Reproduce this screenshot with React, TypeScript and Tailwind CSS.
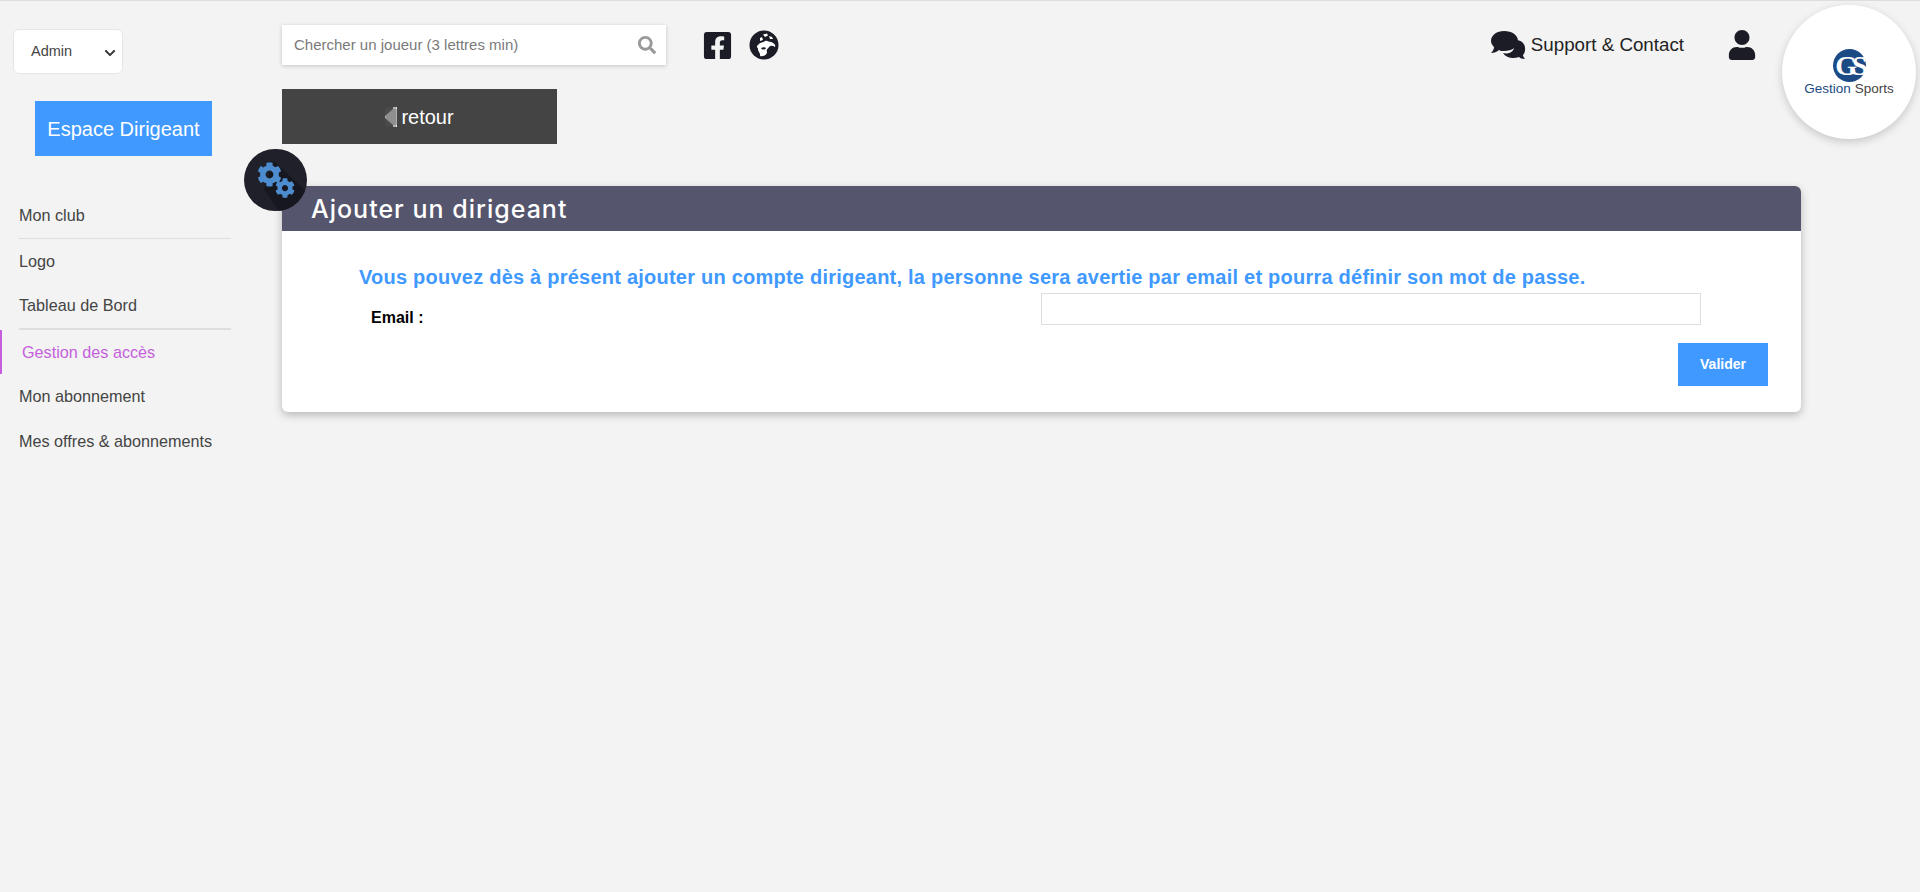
import { FaChevronDown, FaCog, FaFacebookSquare, FaSearch, FaUser } from "react-icons/fa";

const menu = [
  { label: "Mon club", border: "border-b border-[#dedede]", height: "h-[46px]" },
  { label: "Logo", border: "", height: "h-[44px]" },
  { label: "Tableau de Bord", border: "border-b-2 border-[#dedede]", height: "h-[47px]" },
  { label: "Gestion des accès", active: true, border: "", height: "h-[44px]" },
  { label: "Mon abonnement", border: "", height: "h-[45px]" },
  { label: "Mes offres & abonnements", border: "", height: "h-[45px]" },
];

function Sidebar() {
  return (
    <aside className="w-[282px] shrink-0 pt-[28px]">
      <div className="relative ml-[13px] flex h-[45px] w-[110px] items-center rounded-md border border-[#e6e6e6] bg-white pl-[17px] text-[14.5px] text-[#444]">
        Admin
        <FaChevronDown className="absolute right-[6px] top-[17px] text-[12px] text-[#333]" />
      </div>
      <div className="ml-[35px] mt-[27px] flex h-[55px] w-[177px] items-center justify-center bg-[#4099ff] text-[20px] text-white">
        Espace Dirigeant
      </div>
      <nav className="mt-[37px] w-[231px]">
        {menu.map((item) => (
          <div key={item.label} className={`${item.active ? "border-l-2 border-[#c55fdc]" : ""} ${item.height}`}>
            <div
              className={`flex h-full items-center text-[16.2px] ${item.border} ${
                item.active ? "ml-[20px] text-[#c55fdc]" : "ml-[19px] text-[#444]"
              }`}
            >
              {item.label}
            </div>
          </div>
        ))}
      </nav>
    </aside>
  );
}

function GlobeIcon() {
  return (
    <svg width="30" height="30" viewBox="0 0 30 30" className="ml-[16px]">
      <circle cx="15" cy="15" r="14.5" fill="#1b1c26" />
      <path d="M14 4.5L18 3.5L19 5.5L16 7Z M20 6L23 7L24 9L21 9Z M11 8L13 7L14 10L11 11Z" fill="#fff" />
      <path d="M9 15C11 12 14 13 16 11C18 10 20 12 22 12C25 13 27 15 26 17C24 16 22 15 20 17C19 19 17 19 18 22C18 25 14 27 11 26C12 23 8 21 9 18C7 17 8 16 9 15Z" fill="#fff" />
      <path d="M12 18C14 17 16 17 17 18C16 20 13 20 12 18Z" fill="#1b1c26" />
    </svg>
  );
}

function ChatIcon() {
  return (
    <svg width="36" height="28" viewBox="0 0 36 28">
      <path d="M21 9C29 8 35 12 34 19C34 21 33 23 32 24C32 25 33 27 34 28C31 28 29 27 28 26C22 28 15 27 12 22C20 24 27 18 21 9Z" fill="#1b1c26" />
      <path d="M13 0C21 0 27 4 27 10C27 16 21 20 13 20C11 20 9 20 8 19C6 21 3 22 0 22C2 20 3 18 3 16C1 14 0 12 0 10C0 4 6 0 13 0Z" fill="#1b1c26" />
    </svg>
  );
}

function TopBar() {
  return (
    <div className="flex h-[40px] items-center pr-[163px]">
      <div className="flex h-[40px] w-[384px] items-center justify-between bg-white pl-[12px] pr-[10px] text-[15px] text-[#7a7a7a] shadow-[0_1px_4px_rgba(0,0,0,0.2)]">
        Chercher un joueur (3 lettres min)
        <FaSearch className="text-[18px] text-[#999]" />
      </div>
      <FaFacebookSquare className="ml-[36px] text-[31px] text-[#1b1c26]" />
      <GlobeIcon />
      <div className="ml-auto flex items-center">
        <ChatIcon />
        <span className="ml-[4px] text-[18.75px] text-[#222]">Support & Contact</span>
        <FaUser className="ml-[43px] text-[30px] text-[#1b1c26]" />
      </div>
    </div>
  );
}

function RetourArrow() {
  return (
    <svg width="12" height="20" viewBox="0 0 12 20" className="mr-[4px]">
      <path d="M12 0V20H8V18L0 11V9L8 2V0Z" fill="#e2e2e2" />
      <path d="M2 0V20M4 0V20M6 0V20M8 0V20M10 0V20M0 3H12M0 5H12M0 7H12M0 9H12M0 11H12M0 13H12M0 15H12M0 17H12" stroke="#555" strokeWidth="0.7" />
    </svg>
  );
}

function GearBadge() {
  return (
    <div className="absolute left-[-38px] top-[-37px] h-[62px] w-[63px] overflow-hidden rounded-full bg-[#1f2029]">
      <svg width="63" height="62" viewBox="0 0 63 62" className="absolute left-0 top-0">
        <path d="M30 12L66 46V70H40L20 40Z" fill="#17181f" />
      </svg>
      <FaCog className="absolute left-[13px] top-[13px] text-[25px] text-[#4d8ccf]" />
      <FaCog className="absolute left-[31px] top-[29px] text-[20px] text-[#4d8ccf]" />
    </div>
  );
}

function Card() {
  return (
    <section className="relative mt-[42px] h-[226px] w-[1519px] rounded-md bg-white shadow-[0_3px_8px_rgba(0,0,0,0.25)]">
      <GearBadge />
      <h1 className="flex h-[45px] items-center rounded-t-md bg-[#55556d] pl-[29px] pt-[2px] font-['Inter',sans-serif] text-[25px] font-medium tracking-[1px] text-white">
        Ajouter un dirigeant
      </h1>
      <div className="pl-[77px] pr-[33px] pt-[32px]">
        <p className="h-[30px] text-[20px] font-bold leading-[28px] tracking-[0.23px] text-[#4099ff]">
          Vous pouvez dès à présent ajouter un compte dirigeant, la personne sera avertie par email et pourra définir son mot de passe.
        </p>
        <div className="flex h-[32px]">
          <label className="w-[682px] pl-[12px] pt-[17px] text-[16px] font-bold leading-none text-black">Email :</label>
          <input className="h-[32px] w-[660px] border border-[#dedede] bg-white" />
        </div>
        <div className="mt-[18px] flex justify-end">
          <button className="h-[43px] w-[90px] bg-[#4099ff] text-[14px] font-bold text-white">Valider</button>
        </div>
      </div>
    </section>
  );
}

function Logo() {
  return (
    <div className="absolute left-[1782px] top-[4px] flex h-[134px] w-[134px] flex-col items-center rounded-full bg-white pt-[44px] shadow-[0_3px_8px_rgba(0,0,0,0.18)]">
      <div className="flex h-[33px] w-[33px] items-center justify-center rounded-full bg-[#1c4a85] font-['Liberation_Serif',serif] text-[28px] font-bold leading-none tracking-[-5px] text-white">
        GS
      </div>
      <div className="-mt-px whitespace-nowrap text-[13.5px] leading-[16px] text-[#444]">
        <span className="text-[#1c4a85]">Gestion</span> Sports
      </div>
    </div>
  );
}

export default function App() {
  return (
    <div className="relative flex h-[892px] overflow-hidden border-t border-[#dddddd] bg-[#f3f3f3] font-['Liberation_Sans',Arial,sans-serif]">
      <Sidebar />
      <main className="min-w-0 flex-1 pt-[24px]">
        <TopBar />
        <div className="mt-[24px] flex h-[55px] w-[275px] items-center justify-center bg-[#444444] text-[20px] text-white">
          <RetourArrow />
          retour
        </div>
        <Card />
      </main>
      <Logo />
    </div>
  );
}
